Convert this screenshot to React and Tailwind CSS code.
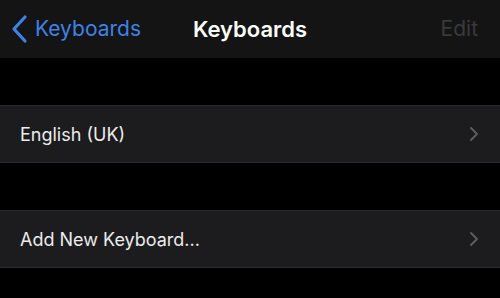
function Chevron({ className }) {
  return (
    <svg width="10" height="16" viewBox="0 0 10 16" className={className} fill="none">
      <path d="M2 2 L8 8 L2 14" stroke="currentColor" strokeWidth="2" strokeLinecap="round" strokeLinejoin="round" />
    </svg>
  );
}

function Row({ label }) {
  return (
    <div className="flex items-center justify-between h-[58px] bg-[#1c1c1e] border-y border-[#2a2a2c] pl-5 pr-[21px]">
      <span className="text-[18px] text-[#ececec]">{label}</span>
      <Chevron className="text-[#5c5c60]" />
    </div>
  );
}

export default function App() {
  return (
    <div
      className="w-[500px] h-[298px] bg-black overflow-hidden"
      style={{ fontFamily: 'Inter, "Liberation Sans", sans-serif' }}
    >
      <div className="flex items-center justify-between h-[58px] bg-[#141414] pl-[11px] pr-[22px] relative">
        <div className="flex items-center gap-[7px] text-[#3f82e6]">
          <svg width="17" height="30" viewBox="0 0 17 30" fill="none">
            <path d="M14 3 L3 15 L14 27" stroke="currentColor" strokeWidth="3.2" strokeLinecap="round" strokeLinejoin="round" />
          </svg>
          <span className="text-[21px]">Keyboards</span>
        </div>
        <span className="absolute left-1/2 -translate-x-1/2 text-[22px] font-semibold text-white">
          Keyboards
        </span>
        <span className="text-[21px] text-[#3a3a3c]">Edit</span>
      </div>
      <div className="h-[47px]" />
      <Row label="English (UK)" />
      <div className="h-[47px]" />
      <Row label="Add New Keyboard..." />
    </div>
  );
}
